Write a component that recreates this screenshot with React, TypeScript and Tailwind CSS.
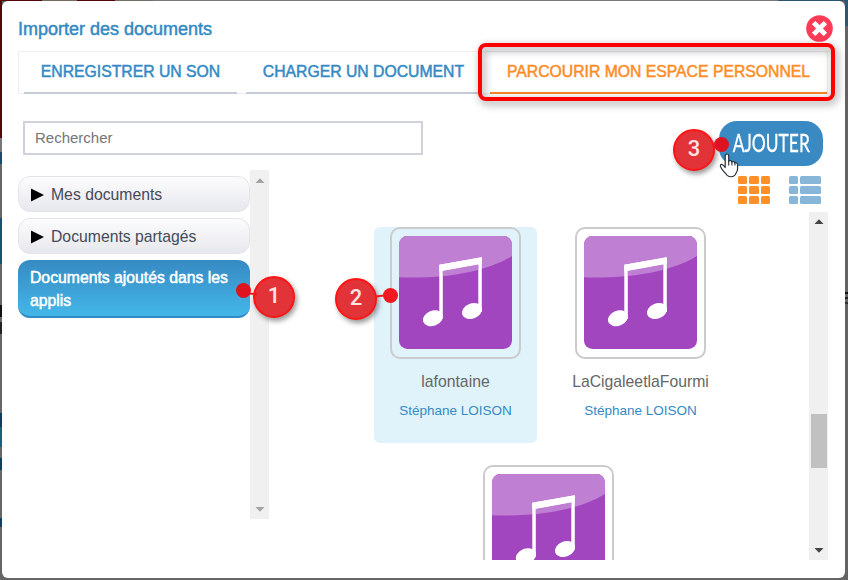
import React from "react";

function Strip({ segments, className }: { segments: [number, string][]; className: string }) {
  return (
    <div className={className}>
      {segments.map(([size, color], i) => (
        <div key={i} style={{ flex: `${size} 0 0px`, background: color }} />
      ))}
    </div>
  );
}

function MusicIcon() {
  return (
    <svg width="113" height="113" viewBox="0 0 113 113" className="block shrink-0">
      <rect width="113" height="113" rx="8.5" fill="#a246c0" />
      <path d="M0 41.300V8.500A8.500 8.500 0 0 1 8.500 0H104.500A8.500 8.500 0 0 1 113 8.500V20C92 33 55 43 0 41.300Z" fill="#bf7fd3" />
      <path d="M40.300 28.700 82.800 21.300V76H79.300V28.400L43.800 35V83H40.300Z" fill="#fff" />
      <path d="M40.300 28.700 82.800 21.300V28L40.300 35.400Z" fill="#fff" />
      <path d="M43.800 35 79.300 28.600V33.500L43.800 40Z" fill="#bf7fd3" />
      <ellipse cx="33.900" cy="82.200" rx="10.400" ry="7.600" transform="rotate(-22 33.900 82.200)" fill="#fff" />
      <ellipse cx="73" cy="75" rx="10.400" ry="7.600" transform="rotate(-22 73 75)" fill="#fff" />
    </svg>
  );
}

function DocCard({ name, author, selected }: { name: string; author: string; selected?: boolean }) {
  return (
    <div className={`flex h-[216px] w-[163px] shrink-0 flex-col items-center rounded-md ${selected ? "bg-[#e0f3fb]" : ""}`}>
      <div className="flex h-[132px] w-[131px] shrink-0 justify-center rounded-[10px] border-2 border-[#cbcbcd] pt-[7px]">
        <MusicIcon />
      </div>
      <div className="mt-[13px] text-[15.75px] leading-[20px] text-[#666]">{name}</div>
      <div className="mt-[10px] text-[13.5px] leading-[18px] text-[#338ac5]">{author}</div>
    </div>
  );
}

function Tab({ label, className }: { label: string; className: string }) {
  return (
    <div className={`flex h-[42px] items-center justify-center border-b-2 text-[15.75px] whitespace-nowrap [-webkit-text-stroke-width:0.5px] ${className}`}>
      {label}
    </div>
  );
}

function Badge({ n, className, dotClass }: { n: number; className: string; dotClass: string }) {
  return (
    <div className={`absolute flex size-[42px] items-center justify-center rounded-full border-2 border-[#ff1414] bg-[#e23338] pb-[3px] font-['Roboto',sans-serif] text-[22px] font-medium text-[#ffe4e4] shadow-[2px_3px_5px_rgba(0,0,0,0.4)] ${className}`}>
      {n}
      <span className={`absolute h-[2px] w-[8px] bg-[#f01820] ${n === 2 ? "-right-[9px] top-[15px] -rotate-6" : n === 1 ? "-left-[6px] top-[15px] rotate-6" : "-right-[8px] top-[15px] -rotate-6"}`} />
      <span className={`absolute size-[15px] rounded-full ${dotClass}`} />
    </div>
  );
}

function Arrow({ up, color }: { up?: boolean; color: string }) {
  return (
    <svg width="10" height="5" viewBox="0 0 10 5" className="block">
      <path d={up ? "M0.500 5 5 0.300 9.500 5Z" : "M0.500 0 5 4.700 9.500 0Z"} fill={color} />
    </svg>
  );
}

function Folder({ label }: { label: string }) {
  return (
    <div className="flex h-[36px] items-center rounded-[12px] border border-[#e3e5eb] bg-linear-to-b from-[#fcfcfd] to-[#e7e8ed] pt-px pl-[12px] text-[15.75px] text-[#454a57]">
      <svg width="13" height="14" viewBox="0 0 13 14" className="mt-px mr-[7px]">
        <path d="M0 0.500 13 7 0 13.500Z" fill="#000" />
      </svg>
      {label}
    </div>
  );
}

export default function App() {
  return (
    <div className="relative flex h-[580px] w-[848px] flex-col overflow-hidden bg-[#666] font-['Liberation_Sans',Arial,sans-serif]">
      <Strip className="flex h-px shrink-0" segments={[[42, "#550408"], [35, "#756b61"], [38, "#550408"], [38, "#756b66"], [625, "#7a7a7a"], [70, "#28566f"]]} />
      <div className="flex h-[577px] shrink-0">
        <Strip
          className="flex w-[2px] shrink-0 flex-col"
          segments={[[137, "#55060a"], [14, "#777"], [12, "#164c70"], [54, "#666"], [46, "#125274"], [41, "#666"], [12, "#111"], [5, "#666"], [12, "#222"], [79, "#666"], [14, "#0c3d5e"], [20, "#176080"], [11, "#666"], [12, "#0d3f62"], [48, "#666"], [9, "#0e3f68"], [51, "#666"]]}
        />
        <main className="flex w-[843px] shrink-0 flex-col rounded-[6px] bg-white">
          <header className="flex h-[50px] shrink-0 items-start justify-between pr-[12px] pl-[16px]">
            <h1 className="mt-[17px] text-[18px] leading-[22px] text-[#338ac5] [-webkit-text-stroke-width:0.5px]">Importer des documents</h1>
            <svg width="27" height="27" viewBox="0 0 27 27" className="mt-[14px]">
              <circle cx="13.500" cy="13.500" r="13.300" fill="#ff3b58" />
              <path d="M9.300 9.300 17.700 17.700M17.700 9.300 9.300 17.700" stroke="#fff" strokeWidth="4.800" strokeLinecap="square" strokeLinejoin="round" />
            </svg>
          </header>
          <nav className="ml-[16px] flex h-[43px] w-[810px] shrink-0 border border-[#ededf2] pl-[5px]">
            <Tab label="ENREGISTRER UN SON" className="w-[213px] border-[#c6cbd5] text-[#338ac5]" />
            <Tab label="CHARGER UN DOCUMENT" className="ml-[9px] w-[235px] border-[#c6cbd5] text-[#338ac5]" />
            <Tab label="PARCOURIR MON ESPACE PERSONNEL" className="ml-[9px] w-[337px] border-[#f88928] text-[#ff8c25]" />
          </nav>
          <div className="flex h-[75px] shrink-0 justify-between pr-[22px] pl-[21px]">
            <div className="mt-[27px] flex h-[34px] w-[400px] items-center border-2 border-[#cfd2dc] pl-[10px] text-[15px] text-[#757575]">Rechercher</div>
            <div className="mt-[27px] flex h-[45px] w-[104px] items-center justify-center rounded-[18px] bg-[#398ac2] text-white">
              <span className="scale-x-[0.71] font-['Lato',sans-serif] text-[24.5px] [-webkit-text-stroke-width:0.3px]">AJOUTER</span>
            </div>
          </div>
          <div className="flex h-[391px] shrink-0">
            <aside className="ml-[16px] flex w-[232px] flex-col gap-[6px] pt-[7px]">
              <Folder label="Mes documents" />
              <Folder label="Documents partagés" />
              <div className="h-[58px] rounded-[12px] border-b-2 border-[#308bc5] bg-linear-to-b from-[#378ac3] to-[#43b7e8] pt-[7px] pl-[12px] text-[15.75px] leading-[22.500px] text-white [-webkit-text-stroke-width:0.5px]">
                Documents ajoutés dans les applis
              </div>
            </aside>
            <div className="mt-px flex h-[349px] w-[19px] flex-col items-center justify-between bg-[#f0f0f0] pt-[8px] pb-[7px]">
              <Arrow up color="#a3a3a3" />
              <Arrow color="#a3a3a3" />
            </div>
            <section className="flex flex-1 flex-col">
              <div className="flex h-[43px] shrink-0 justify-end gap-[19px] pt-[7px] pr-[24px]">
                <div className="grid h-[28px] w-[32px] grid-cols-3 grid-rows-3 gap-x-[2px] gap-y-[2px]">
                  {Array.from({ length: 9 }, (_, i) => (
                    <i key={i} className="rounded-[1.5px] bg-[#ff8f29]" />
                  ))}
                </div>
                <div className="grid h-[28px] w-[32px] grid-cols-[9px_21px] grid-rows-3 gap-x-[2px] gap-y-[2px]">
                  {Array.from({ length: 6 }, (_, i) => (
                    <i key={i} className="rounded-[1.5px] bg-[#87b6d9]" />
                  ))}
                </div>
              </div>
              <div className="flex h-[348px] shrink-0 justify-end">
                <div className="flex w-[522px] flex-wrap content-start justify-center gap-x-[22px] gap-y-[22px] overflow-hidden pt-[15px]">
                  <DocCard name="lafontaine" author="Stéphane LOISON" selected />
                  <DocCard name="LaCigaleetlaFourmi" author="Stéphane LOISON" />
                  <DocCard name="" author="" />
                </div>
                <div className="mr-[17px] flex w-[19px] flex-col items-center bg-[#f0f0f0] pt-[7px] pb-[7px]">
                  <Arrow up color="#444" />
                  <div className="mt-[190px] h-[54px] w-[16px] bg-[#c1c1c1]" />
                  <div className="mt-auto">
                    <Arrow color="#444" />
                  </div>
                </div>
              </div>
            </section>
          </div>
        </main>
        <Strip
          className="flex w-[3px] shrink-0 flex-col"
          segments={[[25, "#285970"], [266, "#646464"], [2, "#111"], [3, "#666"], [2, "#222"], [3, "#666"], [2, "#333"], [274, "#646464"]]}
        />
      </div>
      <div className="absolute top-[43px] left-[478px] h-[58px] w-[357px] rounded-[8px] border-4 border-[#ff0000] drop-shadow-[2px_3px_4px_rgba(0,0,0,0.45)]" />
      <Badge n={1} className="top-[276px] left-[253px]" dotClass="-left-[19px] top-[5px] bg-[#dd1420]" />
      <Badge n={2} className="top-[278px] left-[335px]" dotClass="-right-[23px] top-[8px] bg-[#f21a20]" />
      <Badge n={3} className="top-[129px] left-[673px]" dotClass="-right-[16px] top-[6px] bg-[#dd1420]" />
      <svg width="20" height="25" viewBox="0 0 20 25" className="absolute top-[153px] left-[719px]">
        <path
          d="M6.200 14.500V3C6.200 0.300 9.700 0.300 9.700 3V8.300C10.600 7 12.700 7.400 12.900 9C13.900 8 15.700 8.600 15.900 10C17 9.300 18.600 10 18.600 11.600V15.500C18.600 18.500 17.200 19.600 16 22C14.500 24.300 9.500 24.300 7.800 22C7 20.500 4.200 18.600 2.400 15.300C1.400 13.400 0.800 12.700 1.600 11.800C2.600 10.900 4.400 11.700 6.200 14.500Z"
          fill="#fff" stroke="#2a3038" strokeWidth="1.200" strokeLinejoin="round"
        />
        <path d="M9.700 8V12.500M12.900 9V12.500M15.900 10V12.500" stroke="#2a3038" strokeWidth="1.100" />
      </svg>
    </div>
  );
}
